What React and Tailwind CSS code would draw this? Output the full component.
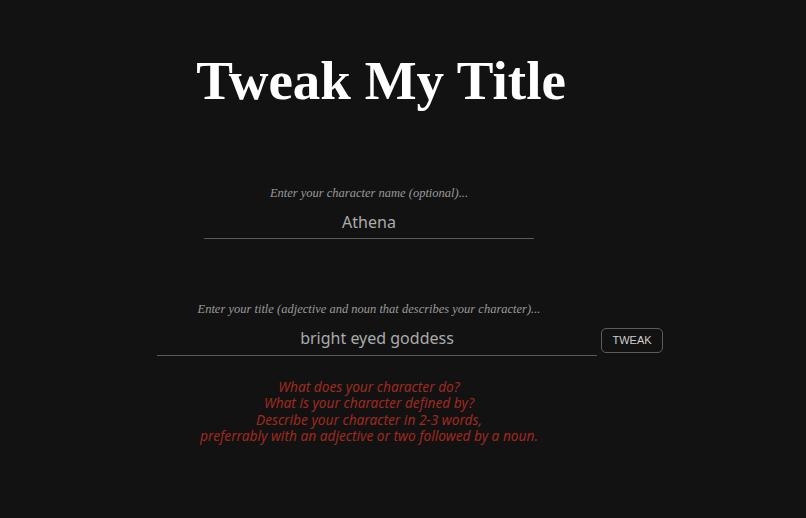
export default function App() {
  const serif = { fontFamily: '"Liberation Serif", "Times New Roman", serif' };
  return (
    <div className="min-h-[518px] w-full bg-[#121212] pb-10">
      <h1
        className="pt-[53px] pr-[44px] text-center text-[55px] font-bold leading-none text-white"
        style={serif}
      >
        Tweak My Title
      </h1>

      <div className="w-[738px]" style={{ fontFamily: '"Noto Sans", "Open Sans", sans-serif' }}>
        {/* character name */}
        <div className="mt-[77px] flex flex-col items-center">
          <label
            className="text-[12.5px] italic leading-[16px] text-[#9a9a9a]"
            style={serif}
          >
            Enter your character name (optional)...
          </label>
          <div className="mt-[11px] w-[330px] border-b border-[#5a5a5a] pb-[6px] text-center text-[16px] leading-[20px] text-[#ababab]">
            Athena
          </div>
        </div>

        {/* title */}
        <div className="mt-[56px] text-center">
          <label
            className="text-[12.5px] italic leading-[16px] text-[#9a9a9a]"
            style={serif}
          >
            Enter your title (adjective and noun that describes your character)...
          </label>
        </div>
        <div className="mt-[9px] ml-[157px] flex items-start gap-[4px]">
          <div className="w-[440px] border-b border-[#5a5a5a] pb-[7px] text-center text-[16px] leading-[20px] text-[#ababab]">
            bright eyed goddess
          </div>
          <button
            className="h-[25px] w-[62px] rounded-[5px] border border-[#5c5c5c] bg-transparent text-[11px] text-[#cfcfcf]"
            style={{ fontFamily: '"Liberation Sans", Arial, sans-serif' }}
          >
            TWEAK
          </button>
        </div>

        {/* hint */}
        <div className="mt-[23px] text-center text-[13.7px] italic leading-[16.3px] text-[#a0291e]">
          <p>What does your character do?</p>
          <p>What is your character defined by?</p>
          <p>Describe your character in 2-3 words,</p>
          <p>preferrably with an adjective or two followed by a noun.</p>
        </div>
      </div>
    </div>
  );
}
